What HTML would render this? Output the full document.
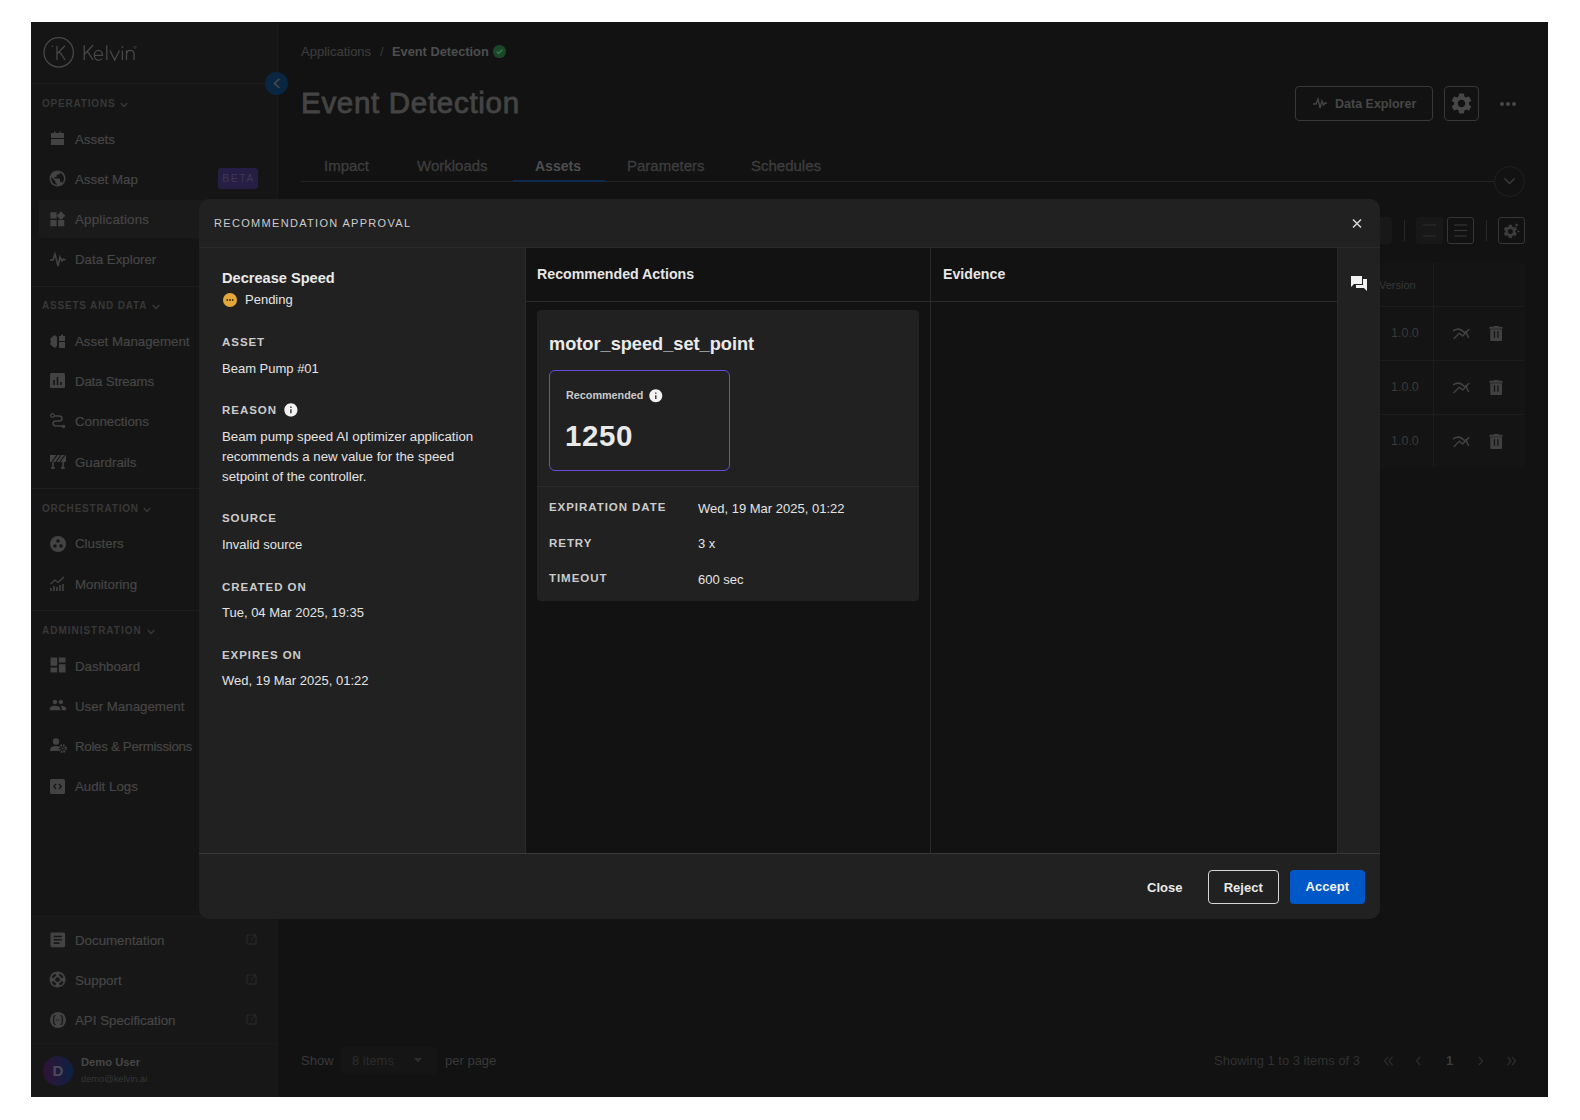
<!DOCTYPE html>
<html><head><meta charset="utf-8">
<style>
*{margin:0;padding:0;box-sizing:border-box}
html,body{width:1580px;height:1120px;background:#fff;overflow:hidden;font-family:"Liberation Sans",sans-serif}
.a{position:absolute}
.t{position:absolute;white-space:nowrap;line-height:20px}
.nav{position:absolute;left:75px;font-size:13.3px;color:#464646;line-height:20px;white-space:nowrap;margin-top:1px;-webkit-text-stroke:0.2px #464646}
.ic{position:absolute;left:50px}
.sec{position:absolute;left:42px;font-size:10px;letter-spacing:0.8px;color:#383838;font-weight:bold;line-height:12px;white-space:nowrap}
.chev{position:absolute}
.dv{position:absolute;left:31px;width:247px;height:1px;background:#1d1d1d}
.lbl{position:absolute;left:222px;font-size:11.5px;letter-spacing:0.95px;font-weight:bold;color:#cccccc;line-height:14px;white-space:nowrap}
.val{position:absolute;left:222px;font-size:13px;color:#e4e4e4;line-height:18px;white-space:nowrap}
.ext{position:absolute;left:246px;width:11px;height:11px}
</style></head><body>
<!-- app background -->
<div class="a" style="left:31px;top:22px;width:1517px;height:1075px;background:#121212"></div>
<!-- sidebar -->
<div class="a" style="left:31px;top:22px;width:247px;height:1075px;background:#151515"></div>
<div class="a" style="left:277px;top:22px;width:1px;height:1075px;background:#1a1a1a"></div>
<!-- logo -->
<svg class="a" style="left:36px;top:30px" width="110" height="45" viewBox="0 0 110 45"><g stroke="#484848" stroke-width="1.3" fill="none" stroke-linecap="butt">
<circle cx="22.7" cy="22.4" r="14.7"/>
<path d="M21 15.7V30M28.9 15.7L21.3 23.6M23.4 21.6L29.2 30"/>
<path d="M48.2 15.3V30M57 15.3L48.5 24.2M51.3 21.4L57.2 30"/>
<path d="M58.6 25.3H66.5C66.5 22.3 64.5 20.3 62.5 20.3C59.9 20.3 58.3 22.6 58.3 25.3C58.3 28.2 60.2 30.3 62.6 30.3C64.3 30.3 65.5 29.5 66.2 28.5"/>
<path d="M70.8 15.5V30"/>
<path d="M73.9 20.5L78.7 30L83.5 20.5"/>
<path d="M86.4 20.5V30"/>
<path d="M90.5 20.5V30M90.5 24.2C90.8 21.7 92.4 20.3 94.5 20.3C96.8 20.3 98 21.8 98 24.3V30"/>
</g><circle cx="16.4" cy="16.3" r="0.8" fill="#484848"/><circle cx="86.4" cy="17.1" r="0.9" fill="#484848"/><circle cx="99" cy="17.3" r="1.1" fill="none" stroke="#484848" stroke-width="0.6"/></svg>
<div class="dv" style="top:83px;width:234px"></div>
<!-- collapse button -->
<div class="a" style="left:265px;top:72px;width:23px;height:23px;border-radius:50%;background:#0b2642"></div>
<svg class="a" style="left:271px;top:77px" width="12" height="13" viewBox="0 0 12 13"><path d="M8.3 1.8 L3.6 6.4 L8.3 11" stroke="#474747" stroke-width="1.7" fill="none"/></svg>

<div class="sec" style="top:98px">OPERATIONS</div>
<svg class="chev" style="left:120px;top:102px" width="8" height="6" viewBox="0 0 8 6"><path d="M0.7 1 L4 4.5 L7.3 1" stroke="#383838" stroke-width="1.4" fill="none"/></svg>
<!-- Assets icon -->
<svg class="ic" style="top:131px" width="15" height="14" viewBox="0 0 15 14"><path d="M1 2h3V0.5h1.5V2h4V0.5H11V2h3v5H1z M1 8h13v6H1z" fill="#434343"/></svg>
<div class="nav" style="top:129px">Assets</div>
<!-- Asset Map globe -->
<svg class="a" style="left:48.1px;top:168.7px" width="19.2" height="19.2" viewBox="0 0 24 24"><path fill="#434343" d="M12 2C6.48 2 2 6.48 2 12s4.48 10 10 10 10-4.48 10-10S17.52 2 12 2zm-1 17.93c-3.95-.49-7-3.85-7-7.93 0-.62.08-1.21.21-1.79L9 15v1c0 1.1.9 2 2 2v1.93zm6.9-2.54c-.26-.81-1-1.39-1.9-1.39h-1v-3c0-.55-.45-1-1-1H8v-2h2c.55 0 1-.45 1-1V7h2c1.1 0 2-.9 2-2v-.41c2.93 1.19 5 4.06 5 7.41 0 2.08-.8 3.97-2.1 5.39z"/></svg>
<div class="nav" style="top:169px">Asset Map</div>
<div class="a" style="left:218px;top:168px;width:40px;height:21px;background:#271e46;border-radius:3px;color:#3e3a4e;font-size:10.5px;letter-spacing:1.5px;line-height:21px;text-align:center;padding-left:1px">BETA</div>
<div class="a" style="left:39px;top:200px;width:200px;height:38px;background:#1a1a1a;border-radius:4px"></div>
<svg class="a" style="left:48.2px;top:209.5px" width="18.7" height="18.7" viewBox="0 0 24 24"><path fill="#434343" d="M13 13v8h8v-8h-8zM3 21h8v-8H3v8zM3 3v8h8V3H3zm13.66-1.31L11 7.34 16.66 13l5.66-5.66-5.66-5.65z"/></svg>
<div class="nav" style="top:209px;letter-spacing:0.2px">Applications</div>
<svg class="ic" style="top:251px" width="16" height="16" viewBox="0 0 16 16"><path d="M0 9 H3 L5 3 L8 15 L10 6 L12 10 L13.5 8 L15.5 9" stroke="#434343" stroke-width="1.6" fill="none"/></svg>
<div class="nav" style="top:249px">Data Explorer</div>
<div class="dv" style="top:286px"></div>
<div class="sec" style="top:300px">ASSETS AND DATA</div>
<svg class="chev" style="left:152px;top:304px" width="8" height="6" viewBox="0 0 8 6"><path d="M0.7 1 L4 4.5 L7.3 1" stroke="#383838" stroke-width="1.4" fill="none"/></svg>
<svg class="ic" style="top:334px" width="16" height="15" viewBox="0 0 16 15"><path d="M2 3 L5 1 L7 3 L7 12 L5 14 L2 12 L0 10 L1 7.5 L0 5z" fill="#434343"/><path d="M9 2 h2 V0.5 h2 V2 h2 v5 h-6z M9 8 h6 v6 h-6z" fill="#434343"/></svg>
<div class="nav" style="top:331px">Asset Management</div>
<svg class="ic" style="top:373px" width="15" height="15" viewBox="0 0 15 15"><rect x="0" y="0" width="15" height="15" rx="1.5" fill="#434343"/><path d="M4 7v5M7.5 4v8M11 9v3" stroke="#151515" stroke-width="1.6"/></svg>
<div class="nav" style="top:371px;letter-spacing:-0.2px">Data Streams</div>
<svg class="ic" style="top:413px" width="16" height="16" viewBox="0 0 16 16"><circle cx="2.5" cy="2.5" r="1.8" fill="none" stroke="#434343" stroke-width="1.3"/><circle cx="13.5" cy="13.5" r="1.8" fill="#434343"/><path d="M4 3 H9 Q12 3 12 5.5 Q12 8 9 8 H6 Q3 8 3 10.5 Q3 13 6 13 H12" stroke="#434343" stroke-width="1.5" fill="none"/></svg>
<div class="nav" style="top:411px">Connections</div>
<svg class="ic" style="top:454px" width="16" height="16" viewBox="0 0 16 16"><rect x="0" y="1" width="16" height="7" fill="#434343"/><path d="M2 8L7 1M6 8L11 1M10 8L15 1" stroke="#151515" stroke-width="1.2"/><path d="M3 8v7M13 8v7M1 14h4M11 14h4" stroke="#434343" stroke-width="1.6"/></svg>
<div class="nav" style="top:452px">Guardrails</div>
<div class="dv" style="top:488px"></div>
<div class="sec" style="top:503px">ORCHESTRATION</div>
<svg class="chev" style="left:143px;top:507px" width="8" height="6" viewBox="0 0 8 6"><path d="M0.7 1 L4 4.5 L7.3 1" stroke="#383838" stroke-width="1.4" fill="none"/></svg>
<svg class="ic" style="top:536px" width="16" height="16" viewBox="0 0 16 16"><circle cx="8" cy="8" r="8" fill="#434343"/><circle cx="8" cy="5" r="1.8" fill="#151515"/><circle cx="5" cy="10" r="1.8" fill="#151515"/><circle cx="11" cy="10" r="1.8" fill="#151515"/></svg>
<div class="nav" style="top:533px">Clusters</div>
<svg class="ic" style="top:576px" width="16" height="16" viewBox="0 0 16 16"><path d="M1 15v-3M4 15v-5M7 15v-4M10 15v-6M13 15v-7" stroke="#434343" stroke-width="1.6"/><path d="M0.5 8 L5 4 L8 6.5 L14 1" stroke="#434343" stroke-width="1.3" fill="none"/></svg>
<div class="nav" style="top:574px">Monitoring</div>
<div class="dv" style="top:610px"></div>
<div class="sec" style="top:625px;letter-spacing:0.98px">ADMINISTRATION</div>
<svg class="chev" style="left:147px;top:629px" width="8" height="6" viewBox="0 0 8 6"><path d="M0.7 1 L4 4.5 L7.3 1" stroke="#383838" stroke-width="1.4" fill="none"/></svg>
<svg class="a" style="left:47.8px;top:655.4px" width="20" height="20" viewBox="0 0 24 24"><path fill="#434343" d="M3 13h8V3H3v10zm0 8h8v-6H3v6zm10 0h8V11h-8v10zm0-18v6h8V3h-8z"/></svg>
<div class="nav" style="top:656px">Dashboard</div>
<svg class="a" style="left:49px;top:696px" width="17.9" height="17.9" viewBox="0 0 24 24"><path fill="#434343" d="M16 11c1.66 0 2.99-1.34 2.99-3S17.66 5 16 5c-1.66 0-3 1.34-3 3s1.34 3 3 3zm-8 0c1.66 0 2.99-1.34 2.99-3S9.66 5 8 5C6.34 5 5 6.34 5 8s1.34 3 3 3zm0 2c-2.33 0-7 1.17-7 3.5V19h14v-2.5c0-2.330-4.67-3.5-7-3.5zm8 0c-.29 0-.62.02-.97.05 1.16.84 1.97 1.97 1.97 3.45V19h6v-2.5c0-2.33-4.67-3.5-7-3.5z"/></svg>
<div class="nav" style="top:696px">User Management</div>
<svg class="ic" style="top:738px" width="17" height="15" viewBox="0 0 17 15"><circle cx="6" cy="3.5" r="3.2" fill="#434343"/><path d="M0 13 Q0 8 6 8 Q8 8 9 9 L8.5 13z" fill="#434343"/><circle cx="12.5" cy="10.5" r="3.3" fill="none" stroke="#434343" stroke-width="2.2" stroke-dasharray="1.6 1"/><circle cx="12.5" cy="10.5" r="1" fill="#434343"/></svg>
<div class="nav" style="top:736px;letter-spacing:-0.3px">Roles &amp; Permissions</div>
<svg class="ic" style="top:779px" width="15" height="15" viewBox="0 0 15 15"><rect x="0" y="0" width="15" height="15" rx="1.5" fill="#434343"/><path d="M6 5 L3.8 7.5 L6 10 M9 5 L11.2 7.5 L9 10" stroke="#151515" stroke-width="1.3" fill="none"/></svg>
<div class="nav" style="top:776px">Audit Logs</div>

<div class="a" style="left:31px;top:915px;width:246px;height:182px;background:#171717"></div>
<div class="dv" style="top:916px;background:#1b1b1b"></div>
<svg class="a" style="left:48px;top:929.9px" width="19.6" height="19.6" viewBox="0 0 24 24"><path fill="#434343" d="M19 3H5c-1.1 0-2 .9-2 2v14c0 1.1.9 2 2 2h14c1.1 0 2-.9 2-2V5c0-1.1-.9-2-2-2zm-5 14H7v-2h7v2zm3-4H7v-2h10v2zm0-4H7V7h10v2z"/></svg>
<div class="nav" style="top:930px">Documentation</div>
<svg class="ext" style="top:934px" viewBox="0 0 11 11"><path d="M5 1H1v9h9V6M6 1h4v4M10 1L5 6" stroke="#2a2a2a" stroke-width="1" fill="none"/></svg>
<svg class="a" style="left:48.1px;top:970.2px" width="19.2" height="19.2" viewBox="0 0 24 24"><path fill="#434343" d="M12 2C6.48 2 2 6.48 2 12s4.48 10 10 10 10-4.48 10-10S17.52 2 12 2zm7.46 7.12l-2.78 1.15c-.51-1.36-1.58-2.44-2.95-2.94l1.15-2.78c2.1.8 3.77 2.47 4.58 4.57zM12 15c-1.66 0-3-1.34-3-3s1.34-3 3-3 3 1.34 3 3-1.34 3-3 3zM9.13 4.54l1.17 2.78c-1.38.5-2.47 1.59-2.98 2.97L4.54 9.13c.81-2.11 2.48-3.78 4.59-4.59zM4.54 14.87l2.78-1.15c.51 1.38 1.59 2.46 2.97 2.96l-1.17 2.78c-2.1-.81-3.77-2.48-4.58-4.59zm10.34 4.59l-1.15-2.78c1.37-.51 2.45-1.59 2.95-2.97l2.78 1.17c-.81 2.1-2.48 3.77-4.58 4.58z"/></svg>
<div class="nav" style="top:970px">Support</div>
<svg class="ext" style="top:974px" viewBox="0 0 11 11"><path d="M5 1H1v9h9V6M6 1h4v4M10 1L5 6" stroke="#2a2a2a" stroke-width="1" fill="none"/></svg>
<svg class="ic" style="top:1012px" width="16" height="16" viewBox="0 0 16 16"><circle cx="8" cy="8" r="8" fill="#434343"/><path d="M5.5 3.5 Q3.5 3.5 3.8 6 Q4 8 2.8 8 Q4 8 3.8 10 Q3.5 12.5 5.5 12.5 M10.5 3.5 Q12.5 3.5 12.2 6 Q12 8 13.2 8 Q12 8 12.2 10 Q12.5 12.5 10.5 12.5" stroke="#171717" stroke-width="1.2" fill="none"/><path d="M6 8h4" stroke="#171717" stroke-width="1.2" stroke-dasharray="1 0.8"/></svg>
<div class="nav" style="top:1010px">API Specification</div>
<svg class="ext" style="top:1014px" viewBox="0 0 11 11"><path d="M5 1H1v9h9V6M6 1h4v4M10 1L5 6" stroke="#2a2a2a" stroke-width="1" fill="none"/></svg>
<div class="dv" style="top:1043px;background:#1b1b1b"></div>
<div class="a" style="left:43px;top:1056px;width:30px;height:30px;border-radius:50%;background:linear-gradient(90deg,#2f1336,#0e2244);color:#4a4a58;font-size:15px;font-weight:bold;line-height:30px;text-align:center">D</div>
<div class="t" style="left:81px;top:1055px;font-size:11.2px;font-weight:bold;color:#464646;line-height:14px">Demo User</div>
<div class="t" style="left:81px;top:1073px;font-size:9.3px;color:#363636;line-height:13px">demo@kelvin.ai</div>

<!-- main header -->
<div class="t" style="left:301px;top:43px;font-size:13px;color:#3b3b3b;line-height:18px;-webkit-text-stroke:0.2px #3b3b3b">Applications</div>
<div class="t" style="left:380px;top:43px;font-size:13px;color:#3b3b3b;line-height:18px">/</div>
<div class="t" style="left:392px;top:43px;font-size:12.8px;font-weight:bold;color:#4e4e4e;line-height:18px">Event Detection</div>
<div class="a" style="left:493.2px;top:45.1px;width:12.6px;height:12.6px;border-radius:50%;background:#1b4729"></div>
<svg class="a" style="left:495px;top:47px" width="9" height="9" viewBox="0 0 9 9"><path d="M1.8 4.6 L3.7 6.4 L7.3 2.7" stroke="#3a7f4f" stroke-width="1.3" fill="none"/></svg>
<div class="t" style="left:301px;top:86px;font-size:29.5px;letter-spacing:0.7px;-webkit-text-stroke:0.85px #444;color:#444444;line-height:34px">Event Detection</div>
<!-- tabs -->
<div class="t" style="left:324px;top:156px;font-size:15px;color:#3e3e3e;-webkit-text-stroke:0.3px #3e3e3e">Impact</div>
<div class="t" style="left:417px;top:156px;font-size:15px;color:#3e3e3e;-webkit-text-stroke:0.3px #3e3e3e">Workloads</div>
<div class="t" style="left:535px;top:156px;font-size:14px;color:#4e4e4e;font-weight:bold">Assets</div>
<div class="t" style="left:627px;top:156px;font-size:15px;color:#3e3e3e;-webkit-text-stroke:0.3px #3e3e3e">Parameters</div>
<div class="t" style="left:751px;top:156px;font-size:15px;color:#3e3e3e;-webkit-text-stroke:0.3px #3e3e3e">Schedules</div>
<div class="a" style="left:301px;top:181px;width:1193px;height:1px;background:#242424"></div>
<div class="a" style="left:513px;top:180px;width:92px;height:2px;background:#0f2a4f"></div>
<div class="a" style="left:1494px;top:166px;width:31px;height:31px;border-radius:50%;border:1px solid #202020"></div>
<svg class="a" style="left:1503px;top:177px" width="13" height="8" viewBox="0 0 13 8"><path d="M1.5 1.5 L6.5 6.5 L11.5 1.5" stroke="#3a3a3a" stroke-width="1.5" fill="none"/></svg>
<!-- header buttons -->
<div class="a" style="left:1295px;top:86px;width:138px;height:35px;border:1px solid #383838;border-radius:4px"></div>
<svg class="a" style="left:1313px;top:96px" width="14" height="14" viewBox="0 0 14 14"><path d="M0 8 H3 L5 3 L7 12 L9 5 L10.5 9 L12 7 H14" stroke="#444" stroke-width="1.4" fill="none"/></svg>
<div class="t" style="left:1335px;top:94px;font-size:12.5px;font-weight:bold;color:#474747">Data Explorer</div>
<div class="a" style="left:1444px;top:86px;width:35px;height:35px;border:1px solid #383838;border-radius:4px"></div>
<svg class="a" style="left:1449px;top:91px" width="25" height="25" viewBox="0 0 24 24"><path fill="#474747" d="M19.14 12.94c.04-.3.06-.61.06-.94 0-.32-.02-.64-.07-.94l2.03-1.58a.49.49 0 0 0 .12-.61l-1.92-3.32a.488.488 0 0 0-.59-.22l-2.39.96c-.5-.38-1.03-.7-1.62-.94l-.36-2.54a.484.484 0 0 0-.48-.41h-3.84c-.24 0-.43.17-.47.41l-.36 2.54c-.59.24-1.13.57-1.62.94l-2.39-.96c-.22-.08-.47 0-.59.22L2.74 8.87c-.12.21-.08.47.12.61l2.03 1.58c-.05.3-.09.63-.09.94s.02.64.07.94l-2.03 1.58a.49.49 0 0 0-.12.61l1.92 3.32c.12.22.37.29.59.22l2.39-.96c.5.38 1.03.7 1.62.94l.36 2.54c.05.24.24.41.48.41h3.84c.24 0 .44-.17.47-.41l.36-2.54c.59-.24 1.13-.56 1.62-.94l2.39.96c.22.08.47 0 .59-.22l1.92-3.32c.12-.22.07-.47-.12-.61l-2.01-1.58zM12 15.6c-1.98 0-3.6-1.62-3.6-3.6s1.62-3.6 3.6-3.6 3.6 1.62 3.6 3.6-1.62 3.6-3.6 3.6z"/></svg>
<div class="a" style="left:1500px;top:102px;width:4px;height:4px;border-radius:50%;background:#474747"></div>
<div class="a" style="left:1506px;top:102px;width:4px;height:4px;border-radius:50%;background:#474747"></div>
<div class="a" style="left:1512px;top:102px;width:4px;height:4px;border-radius:50%;background:#474747"></div>

<!-- toolbar -->
<div class="a" style="left:1370px;top:217px;width:22px;height:27px;background:#181818;border-radius:0 4px 4px 0"></div>
<div class="a" style="left:1404px;top:220px;width:1px;height:21px;background:#262626"></div>
<div class="a" style="left:1416px;top:217px;width:27px;height:27px;background:#181818;border-radius:3px"></div>
<svg class="a" style="left:1422px;top:223px" width="15" height="15" viewBox="0 0 15 15"><path d="M1 2h13M1 13h13" stroke="#2c2c2c" stroke-width="1.2"/></svg>
<div class="a" style="left:1447px;top:217px;width:27px;height:27px;border:1px solid #363636;border-radius:3px"></div>
<svg class="a" style="left:1453px;top:223px" width="15" height="15" viewBox="0 0 15 15"><path d="M1 2h13M1 7.5h13M1 13h13" stroke="#3a3a3a" stroke-width="1.2"/></svg>
<div class="a" style="left:1486px;top:220px;width:1px;height:21px;background:#262626"></div>
<div class="a" style="left:1498px;top:217px;width:27px;height:27px;border:1px solid #363636;border-radius:3px"></div>
<svg class="a" style="left:1501.5px;top:223px" width="16.8" height="16.8" viewBox="0 0 24 24"><path fill="#3c3c3c" d="M19.14 12.94c.04-.3.06-.61.06-.94 0-.32-.02-.64-.07-.94l2.03-1.58a.49.49 0 0 0 .12-.61l-1.92-3.32a.488.488 0 0 0-.59-.22l-2.39.96c-.5-.38-1.03-.7-1.62-.94l-.36-2.54a.484.484 0 0 0-.48-.41h-3.84c-.24 0-.43.17-.47.41l-.36 2.54c-.59.24-1.13.57-1.62.94l-2.39-.96c-.22-.08-.47 0-.59.22L2.74 8.87c-.12.21-.08.47.12.61l2.03 1.58c-.05.3-.09.63-.09.94s.02.64.07.94l-2.03 1.58a.49.49 0 0 0-.12.61l1.92 3.32c.12.22.37.29.59.22l2.39-.96c.5.38 1.03.7 1.62.94l.36 2.54c.05.24.24.41.48.41h3.84c.24 0 .44-.17.47-.41l.36-2.54c.59-.24 1.13-.56 1.62-.94l2.39.96c.22.08.47 0 .59-.22l1.92-3.32c.12-.22.07-.47-.12-.61l-2.01-1.58zM12 15.6c-1.98 0-3.6-1.62-3.6-3.6s1.62-3.6 3.6-3.6 3.6 1.62 3.6 3.6-1.62 3.6-3.6 3.6z"/></svg><svg class="a" style="left:1510px;top:218px" width="14" height="18" viewBox="0 0 14 18"><path fill="#3c3c3c" d="M6.6 4.300000000000001Q6.6 6.9 9.2 6.9Q6.6 6.9 6.6 9.5Q6.6 6.9 3.9999999999999996 6.9Q6.6 6.9 6.6 4.300000000000001Z M8.5 11.700000000000001Q8.5 13.4 10.2 13.4Q8.5 13.4 8.5 15.1Q8.5 13.4 6.8 13.4Q8.5 13.4 8.5 11.700000000000001Z"/></svg>

<!-- table -->
<div class="a" style="left:1370px;top:263px;width:155px;height:204px;background:#141414"></div>
<div class="a" style="left:1370px;top:306px;width:155px;height:1px;background:#1c1c1c"></div>
<div class="a" style="left:1370px;top:360px;width:155px;height:1px;background:#1c1c1c"></div>
<div class="a" style="left:1370px;top:414px;width:155px;height:1px;background:#1c1c1c"></div>
<div class="a" style="left:1433px;top:263px;width:1px;height:204px;background:#1c1c1c"></div>
<div class="t" style="left:1379px;top:276px;font-size:11px;color:#383838;line-height:18px">Version</div>
<div class="t" style="left:1391px;top:324px;font-size:12.5px;color:#3a3a3a;line-height:18px">1.0.0</div>
<div class="t" style="left:1391px;top:378px;font-size:12.5px;color:#3a3a3a;line-height:18px">1.0.0</div>
<div class="t" style="left:1391px;top:432px;font-size:12.5px;color:#3a3a3a;line-height:18px">1.0.0</div>

<svg class="a" style="left:1445px;top:320px" width="65" height="28" viewBox="0 0 65 28"><g stroke="#414141" stroke-width="1.5" fill="none" stroke-linecap="round"><path d="M8.6 10.7Q14.4 6.6 19.8 13.2"/><path d="M9 18.5L14.4 13.2L17.7 16L23.9 9.5"/><path d="M20.6 11.5L23.5 17.3"/></g><rect x="44.4" y="6.8" width="13.2" height="2" rx="0.6" fill="#414141"/><rect x="48.6" y="6" width="4.9" height="1.5" rx="0.5" fill="#414141"/><path d="M45.3 9.3H57V20Q57 21 56 21H46.3Q45.3 21 45.3 20Z" fill="#414141"/><rect x="48.8" y="11.1" width="1.3" height="6.6" fill="#151515"/><rect x="52.3" y="11.1" width="1.3" height="6.6" fill="#151515"/></svg>
<svg class="a" style="left:1445px;top:374px" width="65" height="28" viewBox="0 0 65 28"><g stroke="#414141" stroke-width="1.5" fill="none" stroke-linecap="round"><path d="M8.6 10.7Q14.4 6.6 19.8 13.2"/><path d="M9 18.5L14.4 13.2L17.7 16L23.9 9.5"/><path d="M20.6 11.5L23.5 17.3"/></g><rect x="44.4" y="6.8" width="13.2" height="2" rx="0.6" fill="#414141"/><rect x="48.6" y="6" width="4.9" height="1.5" rx="0.5" fill="#414141"/><path d="M45.3 9.3H57V20Q57 21 56 21H46.3Q45.3 21 45.3 20Z" fill="#414141"/><rect x="48.8" y="11.1" width="1.3" height="6.6" fill="#151515"/><rect x="52.3" y="11.1" width="1.3" height="6.6" fill="#151515"/></svg>
<svg class="a" style="left:1445px;top:427.5px" width="65" height="28" viewBox="0 0 65 28"><g stroke="#414141" stroke-width="1.5" fill="none" stroke-linecap="round"><path d="M8.6 10.7Q14.4 6.6 19.8 13.2"/><path d="M9 18.5L14.4 13.2L17.7 16L23.9 9.5"/><path d="M20.6 11.5L23.5 17.3"/></g><rect x="44.4" y="6.8" width="13.2" height="2" rx="0.6" fill="#414141"/><rect x="48.6" y="6" width="4.9" height="1.5" rx="0.5" fill="#414141"/><path d="M45.3 9.3H57V20Q57 21 56 21H46.3Q45.3 21 45.3 20Z" fill="#414141"/><rect x="48.8" y="11.1" width="1.3" height="6.6" fill="#151515"/><rect x="52.3" y="11.1" width="1.3" height="6.6" fill="#151515"/></svg>
<!-- pagination -->
<div class="a" style="left:278px;top:1042px;width:1270px;height:55px;background:#121212"></div>
<div class="t" style="left:301px;top:1052px;font-size:13px;color:#393939;line-height:18px">Show</div>
<div class="a" style="left:341px;top:1047px;width:96px;height:27px;background:#151515;border-radius:4px"></div>
<div class="t" style="left:352px;top:1052px;font-size:13px;color:#2c2c2c;line-height:18px">8 items</div>
<svg class="a" style="left:414px;top:1058px" width="8" height="5" viewBox="0 0 8 5"><path d="M0 0h8L4 4.5z" fill="#2e2e2e"/></svg>
<div class="t" style="left:445px;top:1052px;font-size:13px;color:#393939;line-height:18px">per page</div>
<div class="t" style="left:1214px;top:1052px;font-size:13px;color:#313131;line-height:18px">Showing 1 to 3 items of 3</div>
<svg class="a" style="left:1383px;top:1056px" width="11" height="10" viewBox="0 0 11 10"><path d="M5 1L1.5 5L5 9M9.5 1L6 5L9.5 9" stroke="#2c2c2c" stroke-width="1.3" fill="none"/></svg>
<svg class="a" style="left:1415px;top:1056px" width="7" height="10" viewBox="0 0 7 10"><path d="M5 1L1.5 5L5 9" stroke="#2c2c2c" stroke-width="1.3" fill="none"/></svg>
<div class="t" style="left:1446px;top:1052px;font-size:13px;font-weight:bold;color:#3c3c3c;line-height:18px">1</div>
<svg class="a" style="left:1477px;top:1056px" width="7" height="10" viewBox="0 0 7 10"><path d="M2 1L5.5 5L2 9" stroke="#2c2c2c" stroke-width="1.3" fill="none"/></svg>
<svg class="a" style="left:1506px;top:1056px" width="11" height="10" viewBox="0 0 11 10"><path d="M1.5 1L5 5L1.5 9M6 1L9.5 5L6 9" stroke="#2c2c2c" stroke-width="1.3" fill="none"/></svg>

<!-- MODAL -->
<div class="a" style="left:199px;top:199px;width:1181px;height:720px;background:#212121;border-radius:10px"></div>
<div class="a" style="left:199px;top:247px;width:1181px;height:1px;background:#2a2a2a"></div>
<div class="t" style="left:214px;top:216px;font-size:11px;letter-spacing:1.32px;color:#cccccc;line-height:14px">RECOMMENDATION APPROVAL</div>
<svg class="a" style="left:1352px;top:218px" width="10" height="11" viewBox="0 0 10 11"><path d="M1 1.5L9 9.5M9 1.5L1 9.5" stroke="#d2d2d2" stroke-width="1.6"/></svg>

<!-- middle + evidence columns -->
<div class="a" style="left:525px;top:248px;width:813px;height:605px;background:#121212"></div>
<div class="a" style="left:525px;top:247px;width:1px;height:606px;background:#2a2a2a"></div>
<div class="a" style="left:930px;top:247px;width:1px;height:606px;background:#2a2a2a"></div>
<div class="a" style="left:1337px;top:248px;width:1px;height:605px;background:#2a2a2a"></div>
<div class="a" style="left:525px;top:301px;width:812px;height:1px;background:#2a2a2a"></div>
<div class="t" style="left:537px;top:264px;font-size:14.2px;font-weight:bold;color:#e6e6e6">Recommended Actions</div>
<div class="t" style="left:943px;top:264px;font-size:14.2px;font-weight:bold;color:#e6e6e6">Evidence</div>
<!-- chat icon -->
<svg class="a" style="left:1351px;top:276px" width="16" height="15" viewBox="0 0 16 15"><path d="M0 0H11V8H3L0 11Z" fill="#f2f2f2"/><path d="M12 3H16V15L13 12H5V9H12Z" fill="#f2f2f2"/></svg>

<!-- card -->
<div class="a" style="left:537px;top:310px;width:382px;height:291px;background:#212121;border-radius:4px"></div>
<div class="t" style="left:549px;top:333px;font-size:18.2px;font-weight:bold;color:#eaeaea;line-height:22px">motor_speed_set_point</div>
<div class="a" style="left:549px;top:370px;width:181px;height:100.5px;border:1.8px solid #6a4ad8;border-radius:6px"></div>
<div class="t" style="left:566px;top:388px;font-size:10.8px;font-weight:bold;color:#cacaca;line-height:14px">Recommended</div>
<svg class="a" style="left:648px;top:387.7px" width="15.6" height="15.6" viewBox="0 0 24 24"><path fill="#f2f2f2" d="M12 2C6.48 2 2 6.48 2 12s4.48 10 10 10 10-4.48 10-10S17.52 2 12 2zm1 15h-2v-6h2v6zm0-8h-2V7h2v2z"/></svg>
<div class="t" style="left:565px;top:420px;font-size:29.5px;letter-spacing:0.6px;font-weight:bold;color:#eaeaea;line-height:32px">1250</div>
<div class="a" style="left:537px;top:486px;width:382px;height:1px;background:#2a2a2a"></div>
<div class="lbl" style="left:549px;top:500px">EXPIRATION DATE</div>
<div class="val" style="left:698px;top:500px">Wed, 19 Mar 2025, 01:22</div>
<div class="lbl" style="left:549px;top:536px">RETRY</div>
<div class="val" style="left:698px;top:535px">3 x</div>
<div class="lbl" style="left:549px;top:571px">TIMEOUT</div>
<div class="val" style="left:698px;top:571px">600 sec</div>

<!-- left column -->
<div class="t" style="left:222px;top:268px;font-size:14.6px;font-weight:bold;color:#eaeaea">Decrease Speed</div>
<div class="a" style="left:223px;top:293px;width:14px;height:14px;border-radius:50%;background:#e4a73a"></div>
<svg class="a" style="left:223px;top:293px" width="14" height="14" viewBox="0 0 14 14"><circle cx="4.3" cy="7" r="0.9" fill="#3a2a08"/><circle cx="7" cy="7" r="0.9" fill="#3a2a08"/><circle cx="9.7" cy="7" r="0.9" fill="#3a2a08"/></svg>
<div class="t" style="left:245px;top:290px;font-size:13px;color:#e4e4e4">Pending</div>
<div class="lbl" style="top:335px">ASSET</div>
<div class="val" style="top:360px">Beam Pump #01</div>
<div class="lbl" style="top:403px">REASON</div>
<svg class="a" style="left:283.1px;top:402px" width="15.8" height="15.8" viewBox="0 0 24 24"><path fill="#f2f2f2" d="M12 2C6.48 2 2 6.48 2 12s4.48 10 10 10 10-4.48 10-10S17.52 2 12 2zm1 15h-2v-6h2v6zm0-8h-2V7h2v2z"/></svg>
<div class="a" style="left:222px;top:427px;width:300px;font-size:13.25px;color:#e4e4e4;line-height:20.1px;white-space:nowrap">Beam pump speed AI optimizer application<br>recommends a new value for the speed<br>setpoint of the controller.</div>
<div class="lbl" style="top:511px">SOURCE</div>
<div class="val" style="top:536px">Invalid source</div>
<div class="lbl" style="top:580px">CREATED ON</div>
<div class="val" style="top:604px">Tue, 04 Mar 2025, 19:35</div>
<div class="lbl" style="top:648px">EXPIRES ON</div>
<div class="val" style="top:672px">Wed, 19 Mar 2025, 01:22</div>

<!-- footer -->
<div class="a" style="left:199px;top:853px;width:1181px;height:1px;background:#383838"></div>
<div class="t" style="left:1147px;top:878px;font-size:13px;font-weight:bold;color:#eaeaea">Close</div>
<div class="a" style="left:1208px;top:869.5px;width:70.5px;height:34.6px;border:1.5px solid #d6d6d6;border-radius:4px;color:#eaeaea;font-size:13px;font-weight:bold;line-height:33px;text-align:center">Reject</div>
<div class="a" style="left:1289.6px;top:869.5px;width:75.4px;height:34.6px;background:#0057c8;border-radius:4px;color:#f4f4f4;font-size:13px;font-weight:bold;line-height:34px;text-align:center">Accept</div>
</body></html>
